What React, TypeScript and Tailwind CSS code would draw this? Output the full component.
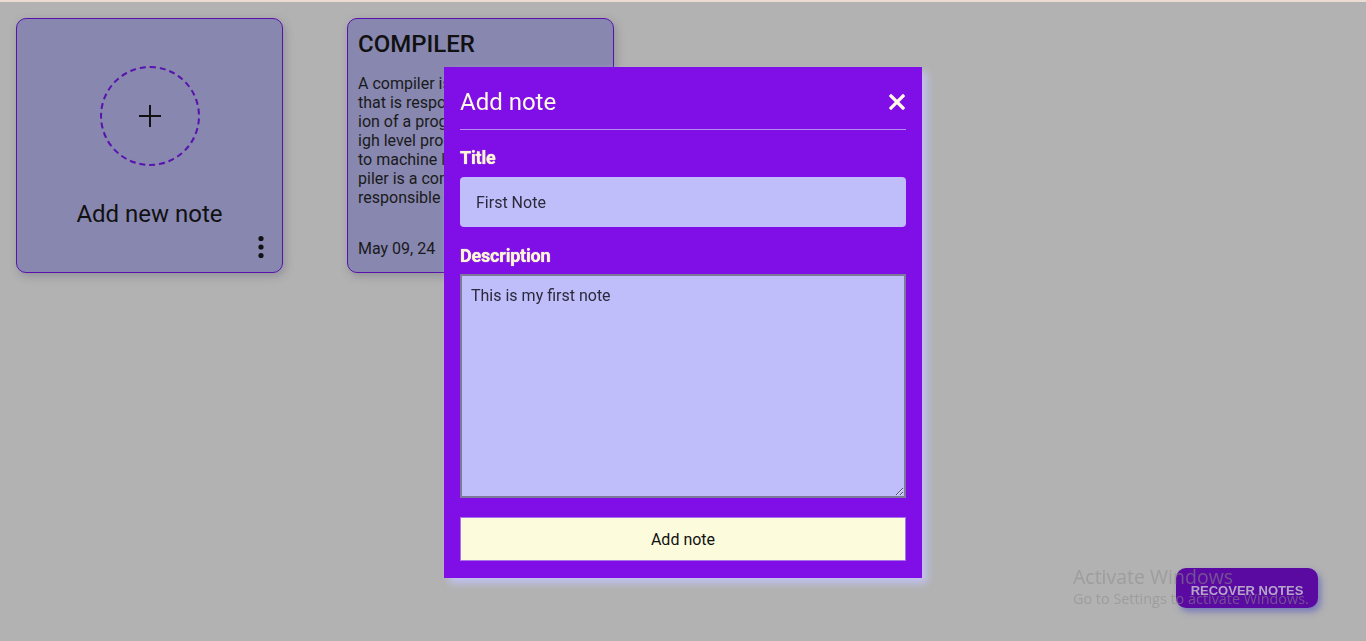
import { useState } from "react";

const COMPILER_LINES = [
  "A compiler is a software program",
  "that is responsible for the translat",
  "ion of a program written in a h",
  "igh level programming language in",
  "to machine language. The com",
  "piler is a computer program that is",
  "responsible for converting code",
];

function PlusCircle() {
  return (
    <div className="flex h-[100px] w-[100px] items-center justify-center rounded-full border-2 border-dashed border-[#5a12ad]">
      <svg width="26" height="26" viewBox="0 0 26 26" fill="none" stroke="#111" strokeWidth="2">
        <path d="M13 2v22M2 13h22" />
      </svg>
    </div>
  );
}

function DotsIcon() {
  return (
    <svg width="8" height="24" viewBox="0 0 8 24" fill="#111">
      <circle cx="4" cy="3.5" r="2.6" />
      <circle cx="4" cy="12" r="2.6" />
      <circle cx="4" cy="20.5" r="2.6" />
    </svg>
  );
}

function AddCard() {
  return (
    <div className="relative flex h-[255px] w-[267px] flex-col items-center rounded-[10px] border border-[#5a12ad] bg-[#8787b0] shadow-[2px_3px_8px_rgba(80,80,110,0.35)]">
      <div className="mt-[47px]">
        <PlusCircle />
      </div>
      <p className="mt-[33px] text-[24px] leading-[30px] text-[#111]">Add new note</p>
      <div className="absolute bottom-[13px] right-[17px]">
        <DotsIcon />
      </div>
    </div>
  );
}

function NoteCard() {
  return (
    <div className="flex h-[255px] w-[267px] flex-col overflow-hidden rounded-[10px] border border-[#5a12ad] bg-[#8787b0] px-[10px] shadow-[2px_3px_8px_rgba(80,80,110,0.35)]">
      <h2 className="mt-[11px] text-[24px] font-medium leading-[28px] text-[#111]">COMPILER</h2>
      <div className="mt-[16px] text-[16px] leading-[19px] text-[#1a1a1a]">
        {COMPILER_LINES.map((l) => (
          <p key={l} className="whitespace-nowrap">
            {l}
          </p>
        ))}
      </div>
      <p className="mt-auto mb-[13px] text-[16px] leading-[20px] text-[#1a1a1a]">May 09, 24</p>
    </div>
  );
}

function AddNoteModal() {
  const [title, setTitle] = useState("First Note");
  const [desc, setDesc] = useState("This is my first note");

  return (
    <div className="fixed inset-0 flex items-center justify-center pt-[4px]">
      <div className="w-[478px] bg-[#800ee6] px-4 pt-4 pb-[17px] shadow-[5px_5px_8px_rgba(196,196,252,0.9)]">
        <div className="flex items-center justify-between border-b border-[#b58cf0] pt-1 pb-3">
          <h3 className="text-[24px] leading-[30px] text-[#fffbe6]">Add note</h3>
          <button type="button" className="mr-[1px] text-[#fffbe6]">
            <svg width="16" height="16" viewBox="0 0 16 16" fill="none" stroke="currentColor" strokeWidth="3.2" strokeLinecap="square">
              <path d="M2 2l12 12M14 2L2 14" />
            </svg>
          </button>
        </div>

        <label className="mt-[17px] block text-[18px] font-bold leading-[22px] tracking-[-0.2px] text-[#fdf6d8] [text-shadow:0_0_1px_#fdf6d8]">Title</label>
        <input
          value={title}
          onChange={(e) => setTitle(e.target.value)}
          className="mt-2 h-[50px] w-full rounded-[4px] bg-[#c0bdfb] px-4 text-[16px] text-[#2a2a3a] outline-none"
        />

        <label className="mt-[18px] block text-[18px] font-bold leading-[22px] tracking-[-0.2px] text-[#fdf6d8] [text-shadow:0_0_1px_#fdf6d8]">Description</label>
        <textarea
          value={desc}
          onChange={(e) => setDesc(e.target.value)}
          className="mt-[7px] block h-[224px] w-full border-2 border-[#7b7b99] bg-[#c0bdfb] px-[9px] py-[10px] text-[16px] leading-[20px] text-[#2a2a3a] outline-none"
        />

        <button
          type="button"
          className="mt-[19px] h-[44px] w-full border border-[#a774e8] bg-[#fcfcdc] pt-[2px] text-[16px] text-[#111]"
        >
          Add note
        </button>
      </div>
    </div>
  );
}

export default function App() {
  return (
    <div className="relative h-[641px] w-full overflow-hidden border-t-2 border-[#ecdcd4] bg-[#b2b2b2] font-['Roboto',sans-serif]">
      <div className="flex gap-16 pt-4 pl-4">
        <AddCard />
        <NoteCard />
      </div>

      <AddNoteModal />

      <button
        type="button"
        className="fixed right-[48px] bottom-[33px] h-[40px] w-[142px] rounded-[10px] bg-[#5a0aa0] pt-[5px] font-['Liberation_Sans',sans-serif] text-[13px] font-bold text-[#b3a6c8] shadow-[3px_4px_6px_rgba(110,110,190,0.8)]"
      >
        RECOVER NOTES
      </button>

      <div className="pointer-events-none fixed left-[1073px] top-[565px] font-['Open_Sans',sans-serif] text-[rgba(140,140,140,0.55)]">
        <p className="text-[19.5px] leading-[24px]">Activate Windows</p>
        <p className="text-[14.4px] leading-[20px]">Go to Settings to activate Windows.</p>
      </div>
    </div>
  );
}
